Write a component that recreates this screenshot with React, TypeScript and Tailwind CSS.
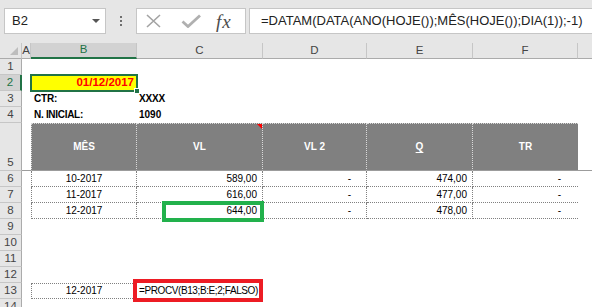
import type { ReactNode } from "react";

const GRID = "grid grid-cols-[22px_9px_106px_126px_104px_106px_105px_14px]";

function FormulaBar() {
  return (
    <div className="flex h-[43px] items-start bg-[#e6e6e6] pl-[4px] pt-[8px]">
      <div className="flex h-[26px] w-[102px] items-center justify-between border border-[#c6c6c6] bg-white pl-[7px] pr-[5px] text-[13px] text-[#222]">
        <span>B2</span>
        <svg width="8" height="4" viewBox="0 0 8 4">
          <path d="M0 0h8L4 4z" fill="#555" />
        </svg>
      </div>

      <div className="flex h-[26px] w-[30px] flex-col items-center justify-center gap-[2px]">
        <span className="h-[2px] w-[2px] bg-[#6e6e6e]" />
        <span className="h-[2px] w-[2px] bg-[#6e6e6e]" />
        <span className="h-[2px] w-[2px] bg-[#6e6e6e]" />
      </div>

      <div className="flex h-[26px] w-[110px] items-center border border-[#c6c6c6] bg-white">
        <svg className="ml-[9px]" width="15" height="14" viewBox="0 0 15 14">
          <path d="M1 1L14 13M14 1L1 13" stroke="#a3a3a3" strokeWidth="1.6" fill="none" />
        </svg>
        <svg className="ml-[20px]" width="20" height="14" viewBox="0 0 20 14">
          <path d="M1.5 7.5L7 12.5L19 1.5" stroke="#b0b0b0" strokeWidth="2.8" fill="none" />
        </svg>
        <span className="ml-[15px] font-['Liberation_Serif',serif] text-[19px] italic leading-none tracking-[1px] text-[#4d4d4d]">
          fx
        </span>
      </div>

      <div className="ml-[3px] flex h-[26px] flex-1 items-center border border-r-0 border-[#c6c6c6] bg-white pl-[11px] text-[13px] whitespace-nowrap text-[#222]">
        =DATAM(DATA(ANO(HOJE());MÊS(HOJE());DIA(1));-1)
      </div>
    </div>
  );
}

function ColHead({ label, selected }: { label: string; selected?: boolean }) {
  return (
    <div
      className={
        selected
          ? "flex items-center justify-center border-r border-b-2 border-r-[#c6c6c6] border-b-[#217346] bg-[#d2d2d2] text-[11.5px] text-[#217346]"
          : "flex items-center justify-center border-r border-b border-r-[#c6c6c6] border-b-[#ababab] bg-[#e6e6e6] text-[11.5px] text-[#444]"
      }
    >
      {label}
    </div>
  );
}

function RowHead({ n, selected, tall }: { n: number; selected?: boolean; tall?: boolean }) {
  return (
    <div
      className={
        (selected
          ? "border-r-2 border-r-[#217346] bg-[#d2d2d2] text-[#217346] "
          : "border-r border-r-[#ababab] bg-[#e6e6e6] text-[#444] ") +
        (tall ? "items-end pb-[2px] " : "items-center ") +
        "flex justify-center border-b border-b-[#c6c6c6] text-[11.5px]"
      }
    >
      {n}
    </div>
  );
}

function Row({
  n,
  selected,
  tall,
  children,
}: {
  n: number;
  selected?: boolean;
  tall?: boolean;
  children?: ReactNode;
}) {
  return (
    <div className={`${GRID} ${tall ? "h-[48px]" : "h-[16px]"}`}>
      <RowHead n={n} selected={selected} tall={tall} />
      {children}
    </div>
  );
}

function DataRow({ n, month, vl, q }: { n: number; month: string; vl: string; q: string }) {
  return (
    <Row n={n}>
      <div />
      <div className="flex items-center justify-center border-r border-b border-l border-dotted border-[#808080]">
        {month}
      </div>
      <div className="flex items-center justify-end border-r border-b border-dotted border-[#808080] pr-[5px]">
        {vl}
      </div>
      <div className="flex items-center justify-end border-r border-b border-dotted border-[#808080] pr-[15px]">
        -
      </div>
      <div className="flex items-center justify-end border-r border-b border-dotted border-[#808080] pr-[5px]">
        {q}
      </div>
      <div className="flex items-center justify-end border-b border-dotted border-[#808080] pr-[17px]">
        -
      </div>
      <div />
    </Row>
  );
}

const headCell =
  "flex items-center justify-center bg-[#808080] font-bold text-white border-t border-b border-[#dadada] border-b-[#9c9c9c] [border-style:dotted_dotted_solid_dotted]";

function Sheet() {
  return (
    <div className="relative text-[10px] leading-none text-black">
      <div className={`${GRID} h-[16px]`}>
        <div className="relative border-r border-b border-r-[#c6c6c6] border-b-[#ababab] bg-[#e6e6e6]">
          <svg className="absolute top-[4px] left-[10px]" width="8" height="8" viewBox="0 0 8 8">
            <path d="M8 0V8H0z" fill="#bdbdbd" />
          </svg>
        </div>
        <ColHead label="A" />
        <ColHead label="B" selected />
        <ColHead label="C" />
        <ColHead label="D" />
        <ColHead label="E" />
        <ColHead label="F" />
        <div className="border-b border-b-[#ababab] bg-[#e6e6e6]" />
      </div>

      <Row n={1} />

      <Row n={2} selected>
        <div />
        <div className="relative flex items-center justify-end bg-[#ffff00] pr-[3px] text-[11.5px] font-bold text-[#ff0000]">
          01/12/2017
          <div className="absolute -inset-[1px] border-2 border-[#217346]" />
          <div className="absolute right-[-3px] bottom-[-3px] h-[6px] w-[6px] border border-white bg-[#217346]" />
        </div>
      </Row>

      <Row n={3}>
        <div />
        <div className="flex items-center pl-[3px] font-bold tracking-[-0.2px]">CTR:</div>
        <div className="flex items-center pl-[2px] font-bold tracking-[-0.2px]">XXXX</div>
      </Row>

      <Row n={4}>
        <div />
        <div className="flex items-center pl-[3px] font-bold tracking-[-0.3px]">N. INICIAL:</div>
        <div className="flex items-center pl-[2px] font-bold">1090</div>
      </Row>

      <Row n={5} tall>
        <div className="border-b border-b-[#9c9c9c]" />
        <div className={`${headCell} border-r border-l`}>MÊS</div>
        <div className={`${headCell} relative border-r`}>
          VL
          <svg className="absolute top-0 right-0" width="5" height="5" viewBox="0 0 5 5">
            <path d="M0 0H5V5z" fill="#ff0000" />
          </svg>
        </div>
        <div className={`${headCell} border-r`}>VL 2</div>
        <div className={`${headCell} border-r`}>
          <span className="underline underline-offset-2">Q</span>
        </div>
        <div className={headCell}>TR</div>
        <div className="border-b border-b-[#9c9c9c]" />
      </Row>

      <DataRow n={6} month="10-2017" vl="589,00" q="474,00" />
      <DataRow n={7} month="11-2017" vl="616,00" q="477,00" />
      <div className="relative">
        <DataRow n={8} month="12-2017" vl="644,00" q="478,00" />
        {/* green highlight around C8 */}
        <div className="absolute top-[-2px] left-[162px] h-[21px] w-[102px] border-4 border-[#22b14c]" />
      </div>

      <Row n={9} />
      <Row n={10} />
      <Row n={11} />
      <Row n={12} />

      <Row n={13}>
        <div />
        <div className="flex items-center justify-center border border-dotted border-[#808080]">12-2017</div>
        <div className="relative">
          {/* red highlight with formula */}
          <div className="absolute top-[-4px] left-[-4px] flex h-[23px] w-[130px] items-center border-4 border-[#ed1c24] bg-white pl-[2px] tracking-[-0.4px] whitespace-nowrap">
            =PROCV(B13;B:E;2;FALSO)
          </div>
        </div>
      </Row>

      <Row n={14} />
    </div>
  );
}

export default function App() {
  return (
    <div className="h-[307px] w-[592px] overflow-hidden bg-white font-['Liberation_Sans',Arial,sans-serif]">
      <FormulaBar />
      <Sheet />
    </div>
  );
}
